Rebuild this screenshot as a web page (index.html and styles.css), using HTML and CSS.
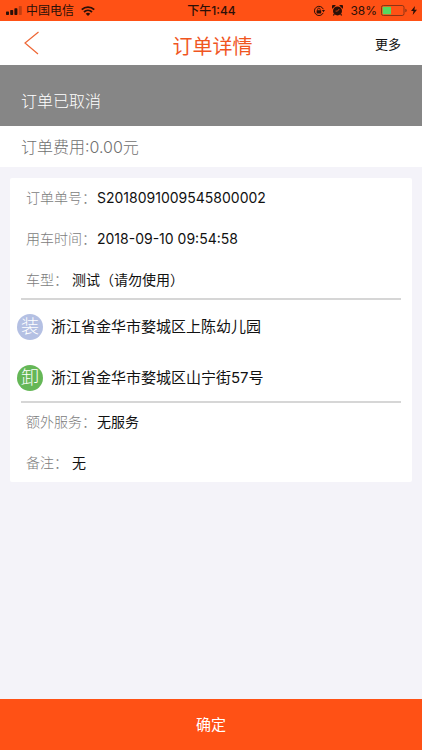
FILE: index.html
```html
<!DOCTYPE html>
<html lang="zh-CN">
<head>
<meta charset="utf-8">
<meta name="viewport" content="width=device-width, initial-scale=1">
<title>订单详情</title>
<link rel="stylesheet" href="styles.css">
</head>
<body>
<div class="status">
  <div class="status-side">
    <svg class="signal" width="16" height="9" viewBox="0 0 16 9" aria-hidden="true"><rect x="0" y="5.5" width="3" height="3.5" rx=".7"/><rect x="4.2" y="4" width="3" height="5" rx=".7"/><rect x="8.4" y="2.2" width="3" height="6.8" rx=".7"/><rect x="12.8" y="0" width="3" height="9" rx=".7" opacity=".28"/></svg>
    <span>中国电信</span>
    <svg class="wifi" width="14" height="10" viewBox="0 0 14 10" fill="none" stroke="currentColor" stroke-width="1.8" aria-hidden="true"><path d="M.8 3.7C4.2.2 9.800.2 13.2 3.7M3 6C5.300 3.800 8.700 3.800 11 6"/><path d="M7 10 4.700 7.700C6 6.500 8 6.500 9.300 7.700Z" fill="currentColor" stroke="none"/></svg>
  </div>
  <span class="clock">下午1:44</span>
  <div class="status-side status-right">
    <svg width="12" height="12" viewBox="0 0 12 12" fill="none" stroke="currentColor" aria-hidden="true"><path d="M10.200 7.900A4.600 4.600 0 1 1 10.300 4.200" stroke-width="1"/><path d="M8.800 4.900H12L10.500 7.200Z" fill="currentColor" stroke="none"/><rect x="3.600" y="5.300" width="4.600" height="3.200" rx=".3" fill="currentColor" stroke="none"/><path d="M4.600 5.500V4.400A1.300 1.300 0 0 1 7.200 4.400V5.500" stroke-width=".8"/></svg>
    <svg class="alarm" width="11" height="11" viewBox="0 0 11 11" aria-hidden="true"><circle cx="5.500" cy="5.900" r="4.500"/><path d="M.3 3.700A2.200 2.200 0 0 1 3.700.4ZM10.700 3.700A2.200 2.200 0 0 0 7.300.4Z"/><path d="M2.300 9 1.400 10.500M8.700 9 9.600 10.500" stroke="currentColor" stroke-width="1.300"/><path d="M7.200 4 5.500 6.100H3.600" fill="none" stroke="#ff5115" stroke-width=".7"/></svg>
    <span class="percent">38%</span>
    <svg class="battery" width="26" height="11" viewBox="0 0 26 11" aria-hidden="true"><rect x=".5" y=".5" width="22.500" height="10" rx="1.800" fill="none" stroke="#8c3415"/><rect x="1.700" y="1.700" width="8.300" height="7.600" rx=".5" fill="#55d960"/><path d="M24.300 3.700Q25.700 4 25.700 5.500T24.300 7.300Z" fill="#8c3415"/></svg>
    <svg width="6" height="9" viewBox="0 0 6 9" aria-hidden="true"><path d="M4 0 0 5H2.500L1.700 9 6 3.700H3.400Z"/></svg>
  </div>
</div>
<header class="nav">
  <button class="back" type="button" aria-label="返回"><svg width="16" height="24" viewBox="0 0 16 24" fill="none" stroke="#ee6634" stroke-width="1.200"><path d="M14.500 1 1 12 14 23"/></svg></button>
  <h1>订单详情</h1>
  <button class="more" type="button">更多</button>
</header>
<main>
  <p class="state">订单已取消</p>
  <p class="fee">订单费用:0.00元</p>
  <section class="card">
    <dl class="group info">
      <div class="row"><dt>订单单号：</dt><dd>S2018091009545800002</dd></div>
      <div class="row"><dt>用车时间：</dt><dd>2018-09-10 09:54:58</dd></div>
      <div class="row"><dt>车型：</dt><dd class="spaced">测试（请勿使用）</dd></div>
    </dl>
    <ul class="group route">
      <li><span class="badge load">装</span><span>浙江省金华市婺城区上陈幼儿园</span></li>
      <li><span class="badge unload">卸</span><span>浙江省金华市婺城区山宁街57号</span></li>
    </ul>
    <dl class="group extra">
      <div class="row"><dt>额外服务：</dt><dd>无服务</dd></div>
      <div class="row"><dt>备注：</dt><dd class="spaced">无</dd></div>
    </dl>
  </section>
</main>
<button class="confirm" type="button">确定</button>
</body>
</html>
```
FILE: styles.css
```css
* {
  box-sizing: border-box;
  margin: 0;
  padding: 0;
}

body {
  display: flex;
  flex-direction: column;
  min-height: 100vh;
  background: #f4f3f9;
  color: #111;
  font-family: Inter, "Noto Sans CJK SC", sans-serif;
  font-size: 14px;
  line-height: 20px;
}

button {
  border: 0;
  background: none;
  color: inherit;
  font: inherit;
  cursor: pointer;
}

svg {
  display: block;
  flex: none;
}

.status {
  display: grid;
  grid-template-columns: 1fr auto 1fr;
  align-items: center;
  height: 21px;
  padding: 0 5px 0 6px;
  background: #ff5115;
  color: #2b1008;
  fill: currentColor;
  font-size: 12px;
}

.status-side {
  display: flex;
  align-items: center;
  gap: 4px;
}

.wifi {
  margin-left: 3px;
}

.status-right {
  justify-content: flex-end;
}

.alarm {
  margin: 0 3px;
}

.clock {
  font-weight: 500;
}

.nav {
  display: grid;
  grid-template-columns: 1fr auto 1fr;
  align-items: center;
  height: 44px;
  padding: 0 21px 0 24px;
  background: #fff;
}

.back {
  justify-self: start;
}

.nav h1 {
  padding-top: 8px;
  color: #f0561f;
  font-size: 20px;
  font-weight: 400;
}

.more {
  justify-self: end;
  padding-top: 2px;
  font-size: 13px;
}

.state {
  padding: 26px 21px 15px;
  background: #868686;
  color: #fff;
  font-size: 16px;
  font-weight: 300;
}

.fee {
  padding: 11px 21px 10px;
  background: #fff;
  color: #707070;
  font-size: 16px;
  font-weight: 300;
}

.card {
  margin: 11px 10px 20px;
  padding: 0 11px;
  border-radius: 2px;
  background: #fff;
}

.group {
  display: grid;
  list-style: none;
}

.group + .group {
  border-top: 2px solid #d6d6d6;
}

.info {
  gap: 21px;
  padding: 10px 0 8px;
}

.extra {
  gap: 21px;
  padding: 9px 0;
}

.row {
  display: flex;
  padding-left: 5px;
}

.row dt {
  color: #7c7c7c;
  font-weight: 300;
}

.row dd {
  padding-left: 1px;
}

.row .spaced {
  padding-left: 4px;
}

.route {
  gap: 25px;
  padding: 14px 0 10px;
}

.route li {
  display: flex;
  align-items: center;
  gap: 8px;
  font-size: 15px;
}

.badge {
  width: 26px;
  height: 26px;
  margin-left: -4px;
  border-radius: 50%;
  color: #fff;
  font-size: 18px;
  font-weight: 300;
  line-height: 26px;
  text-align: center;
}

.load {
  background: #b4c0e3;
}

.unload {
  background: #65b757;
}

.confirm {
  margin-top: auto;
  padding: 16px 0 15px;
  background: #ff5115;
  color: #fff;
  font-size: 15px;
}
```
